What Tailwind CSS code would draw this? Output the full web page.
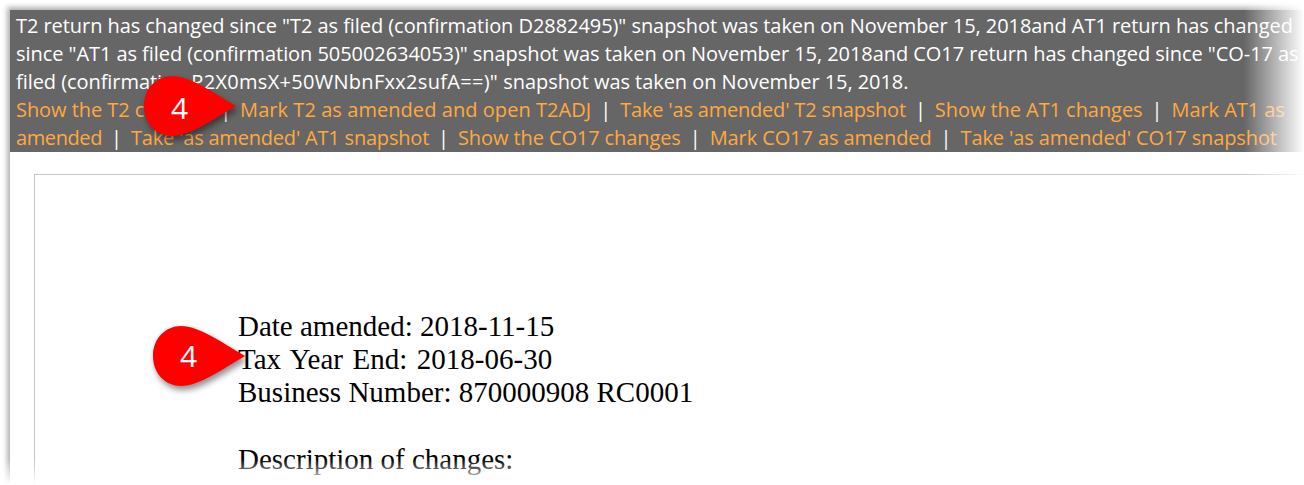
<!DOCTYPE html>
<html lang="en">
  <head>
    <meta charset="UTF-8" />
    <title>Amended return</title>
    <script src="https://cdn.jsdelivr.net/npm/@tailwindcss/browser@4"></script>
  </head>
  <body class="bg-white">
    <div class="relative w-[1304px] h-[485px] overflow-hidden bg-white">
      <!-- screenshot frame -->
      <div class="ml-[10px] mt-[10px] h-[500px] shadow-[-3px_-3px_5px_rgba(0,0,0,0.3)]">
        <!-- banner -->
        <div class="bg-[#666666] h-[142px] pl-[6px] pt-[2px] text-[20px] leading-[28px] whitespace-nowrap overflow-hidden text-white font-['Open_Sans',sans-serif] tracking-[-0.06px]">
          <div>T2 return has changed since "T2 as filed (confirmation D2882495)" snapshot was taken on November 15, 2018and AT1 return has changed</div>
          <div>since "AT1 as filed (confirmation 505002634053)" snapshot was taken on November 15, 2018and CO17 return has changed since "CO-17 as</div>
          <div>filed (confirmation <span class="tracking-[0.3px]">P2X0msX+50WNbnFxx2sufA==)"</span> snapshot was taken on November 15, 2018.</div>
          <div class="flex gap-[9px]">
            <span class="text-[#ffa940]">Show the T2 changes</span><span>|</span>
            <span class="text-[#ffa940] tracking-[0.06px]">Mark T2 as amended and open T2ADJ</span><span>|</span>
            <span class="text-[#ffa940] tracking-[-0.2px]">Take 'as amended' T2 snapshot</span><span>|</span>
            <span class="text-[#ffa940]">Show the AT1 changes</span><span>|</span>
            <span class="text-[#ffa940]">Mark AT1 as</span>
          </div>
          <div class="flex gap-[9px]">
            <span class="text-[#ffa940] tracking-[-0.4px]">amended</span><span>|</span>
            <span class="text-[#ffa940] tracking-[-0.2px]">Take 'as amended' AT1 snapshot</span><span>|</span>
            <span class="text-[#ffa940] tracking-[-0.1px]">Show the CO17 changes</span><span>|</span>
            <span class="text-[#ffa940] tracking-[-0.1px]">Mark CO17 as amended</span><span>|</span>
            <span class="text-[#ffa940] tracking-[-0.12px]">Take 'as amended' CO17 snapshot</span>
          </div>
        </div>
        <!-- document -->
        <div class="ml-[24px] mt-[22px] h-[400px] border-l border-t border-[#c4c4c4] pl-[203px] pt-[135px] font-['Liberation_Serif',serif] text-[29px] leading-[33px] text-black">
          <div>Date amended: 2018-11-15</div>
          <div class="[word-spacing:2.3px]">Tax Year End: 2018-06-30</div>
          <div>Business Number: 870000908 RC0001</div>
          <div class="mt-[34px]">Description of changes:</div>
        </div>
      </div>

      <!-- torn edge fades -->
      <div class="absolute top-0 right-0 w-[60px] h-full bg-gradient-to-r from-white/0 to-white"></div>
      <div class="absolute bottom-0 left-0 w-full h-[26px] bg-gradient-to-b from-white/0 to-white"></div>

      <!-- callouts -->
      <div class="absolute left-[140px] top-[72px] w-[100px] h-[72px]">
        <svg width="100" height="72" viewBox="0 0 100 72" class="drop-shadow-[2px_4px_3px_rgba(0,0,0,0.45)]">
          <path d="M4 34C4 16 17 4 32 4C50 4 72 20 96 34C72 48 50 64 32 64C17 64 4 52 4 34Z" fill="#ff0000" />
        </svg>
        <span class="absolute left-[31px] top-[18px] text-white text-[30px] leading-[36px] font-['Open_Sans',sans-serif]">4</span>
      </div>
      <div class="absolute left-[149px] top-[322px] w-[100px] h-[72px]">
        <svg width="100" height="72" viewBox="0 0 100 72" class="drop-shadow-[2px_4px_3px_rgba(0,0,0,0.45)]">
          <path d="M4 34C4 16 17 4 32 4C50 4 72 20 96 34C72 48 50 64 32 64C17 64 4 52 4 34Z" fill="#ff0000" />
        </svg>
        <span class="absolute left-[31px] top-[16px] text-white text-[30px] leading-[36px] font-['Open_Sans',sans-serif]">4</span>
      </div>
    </div>
  </body>
</html>
